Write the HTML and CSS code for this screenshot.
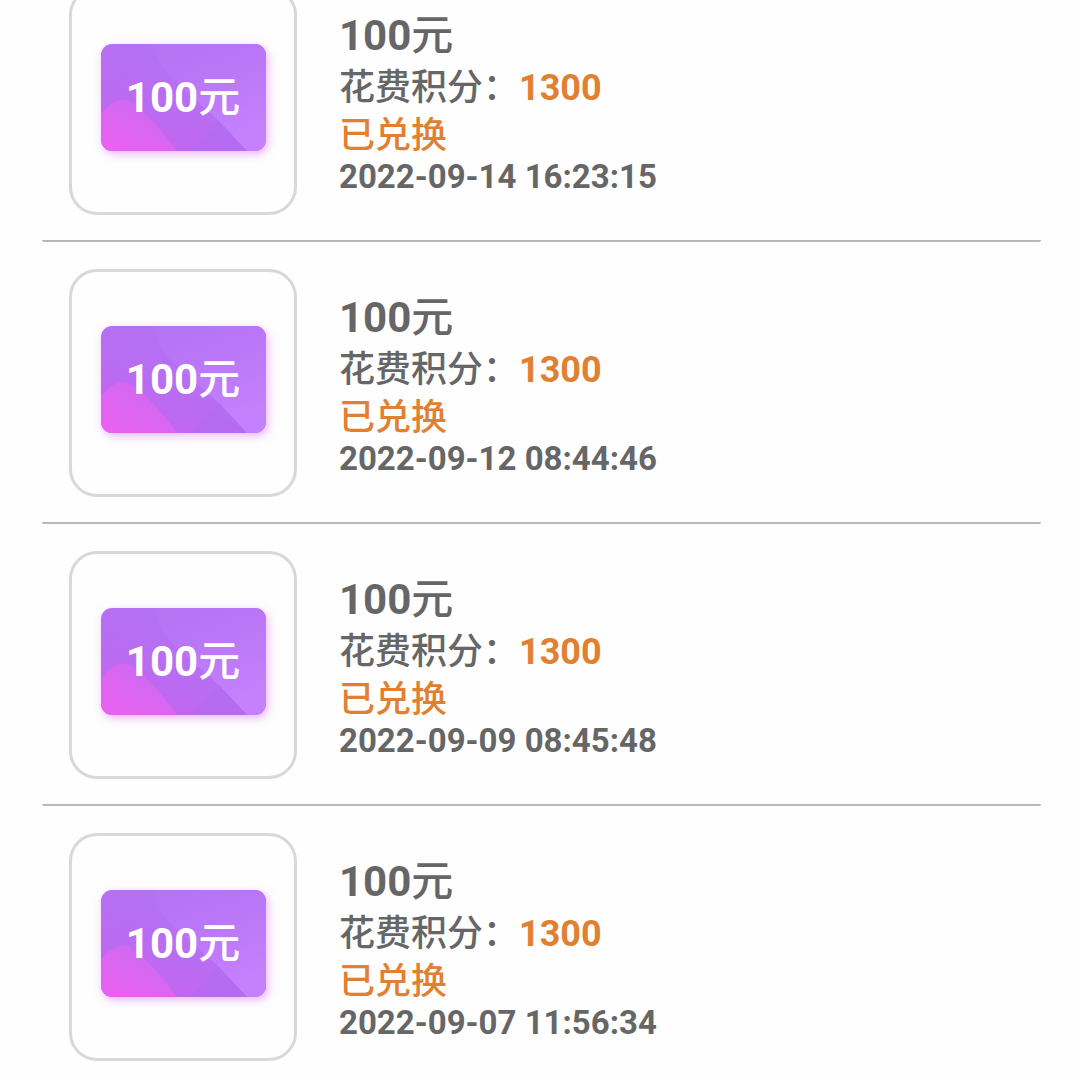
FILE: index.html
```
<!DOCTYPE html>
<html lang="zh-CN">

	<head>
		<meta charset="utf-8" />
		<meta name="viewport" content="width=device-width, initial-scale=1" />
		<title>兑换记录</title>
		<link rel="stylesheet" href="styles.css">
	</head>

	<body>
		<!-- 卡片底图 -->
		<svg class="defs" width="0" height="0" aria-hidden="true">
			<defs>
				<linearGradient id="cardBase" x1="0" y1="1" x2="0.6" y2="0">
					<stop offset="0" stop-color="#cb60ee" />
					<stop offset="0.45" stop-color="#b96cf2" />
					<stop offset="1" stop-color="#b373f3" />
				</linearGradient>
				<linearGradient id="cardLight" x1="0" y1="0" x2="0.4" y2="1">
					<stop offset="0" stop-color="#b374f2" />
					<stop offset="0.4" stop-color="#b976f6" />
					<stop offset="1" stop-color="#c480fd" />
				</linearGradient>
				<linearGradient id="cardPink" x1="0" y1="1" x2="0.7" y2="0.2">
					<stop offset="0" stop-color="#ec60f0" />
					<stop offset="1" stop-color="#cf69f2" />
				</linearGradient>
				<symbol id="card" viewBox="0 0 165 107">
					<rect width="165" height="107" fill="url(#cardBase)" />
					<path d="M54 0H165V107H146L118 77Q92 54 72 36Q54 18 54 0Z" fill="url(#cardLight)" />
					<path d="M90 107L118 77L146 107Z" fill="#b06bf0" opacity="0.5" />
					<path d="M0 70Q8 60 18 56Q24 54 32 59Q54 76 76 107H0Z" fill="url(#cardPink)" />
				</symbol>
			</defs>
		</svg>
		<ul class="list">
			<li class="item">
				<div class="pic">
					<div class="card">
						<svg class="cardBg"><use href="#card" /></svg>
						<span class="cardText">100<b>元</b></span>
					</div>
				</div>
				<div class="info">
					<div class="name">100<b>元</b></div>
					<div class="cost">花费积分：<span class="num">1300</span></div>
					<div class="state">已兑换</div>
					<div class="time">2022-09-14 16:23:15</div>
				</div>
			</li>
			<li class="item">
				<div class="pic">
					<div class="card">
						<svg class="cardBg"><use href="#card" /></svg>
						<span class="cardText">100<b>元</b></span>
					</div>
				</div>
				<div class="info">
					<div class="name">100<b>元</b></div>
					<div class="cost">花费积分：<span class="num">1300</span></div>
					<div class="state">已兑换</div>
					<div class="time">2022-09-12 08:44:46</div>
				</div>
			</li>
			<li class="item">
				<div class="pic">
					<div class="card">
						<svg class="cardBg"><use href="#card" /></svg>
						<span class="cardText">100<b>元</b></span>
					</div>
				</div>
				<div class="info">
					<div class="name">100<b>元</b></div>
					<div class="cost">花费积分：<span class="num">1300</span></div>
					<div class="state">已兑换</div>
					<div class="time">2022-09-09 08:45:48</div>
				</div>
			</li>
			<li class="item">
				<div class="pic">
					<div class="card">
						<svg class="cardBg"><use href="#card" /></svg>
						<span class="cardText">100<b>元</b></span>
					</div>
				</div>
				<div class="info">
					<div class="name">100<b>元</b></div>
					<div class="cost">花费积分：<span class="num">1300</span></div>
					<div class="state">已兑换</div>
					<div class="time">2022-09-07 11:56:34</div>
				</div>
			</li>
		</ul>
	</body>

</html>
```

FILE: styles.css
```
* {
	box-sizing: border-box;
}

body {
	margin: 0;
	background: #fefefe;
	color: #666;
	font-family: Roboto, "Noto Sans CJK SC", sans-serif;
	overflow: hidden;
}

.defs {
	display: block;
}

/* 列表已向上滚动一段 */
.list {
	list-style: none;
	margin: -40px 39px 0 42px;
	padding: 0;
}

.item {
	display: flex;
	align-items: center;
	padding: 27px 27px 25px;
	border-bottom: 2px solid #b8b8b8;
	border-radius: 2px;
}

.item:last-child {
	border-bottom: 0;
}

.pic {
	flex: none;
	display: flex;
	align-items: center;
	justify-content: center;
	width: 228px;
	height: 228px;
	margin-right: 42px;
	border: 3px solid #d8d8d8;
	border-radius: 28px;
}

.card {
	position: relative;
	display: flex;
	align-items: center;
	justify-content: center;
	width: 165px;
	height: 107px;
	margin-bottom: 7px;
	border-radius: 11px;
	overflow: hidden;
	box-shadow: 2px 3px 9px rgba(214, 110, 250, .5);
}

.cardBg {
	position: absolute;
	top: 0;
	left: 0;
	width: 100%;
	height: 100%;
}

.cardText {
	position: relative;
	color: #fff;
	font-size: 42px;
	font-weight: 700;
	line-height: 56px;
}

.name b,
.cardText b {
	font-weight: 500;
}

.name {
	font-size: 42px;
	font-weight: 700;
	line-height: 56px;
}

.cost {
	font-size: 36px;
	font-weight: 500;
	line-height: 48px;
}

.num {
	color: #e08030;
	font-weight: 700;
}

.state {
	color: #e08030;
	font-size: 36px;
	font-weight: 500;
	line-height: 48px;
}

.time {
	font-size: 33px;
	font-weight: 700;
	line-height: 34px;
}
```
